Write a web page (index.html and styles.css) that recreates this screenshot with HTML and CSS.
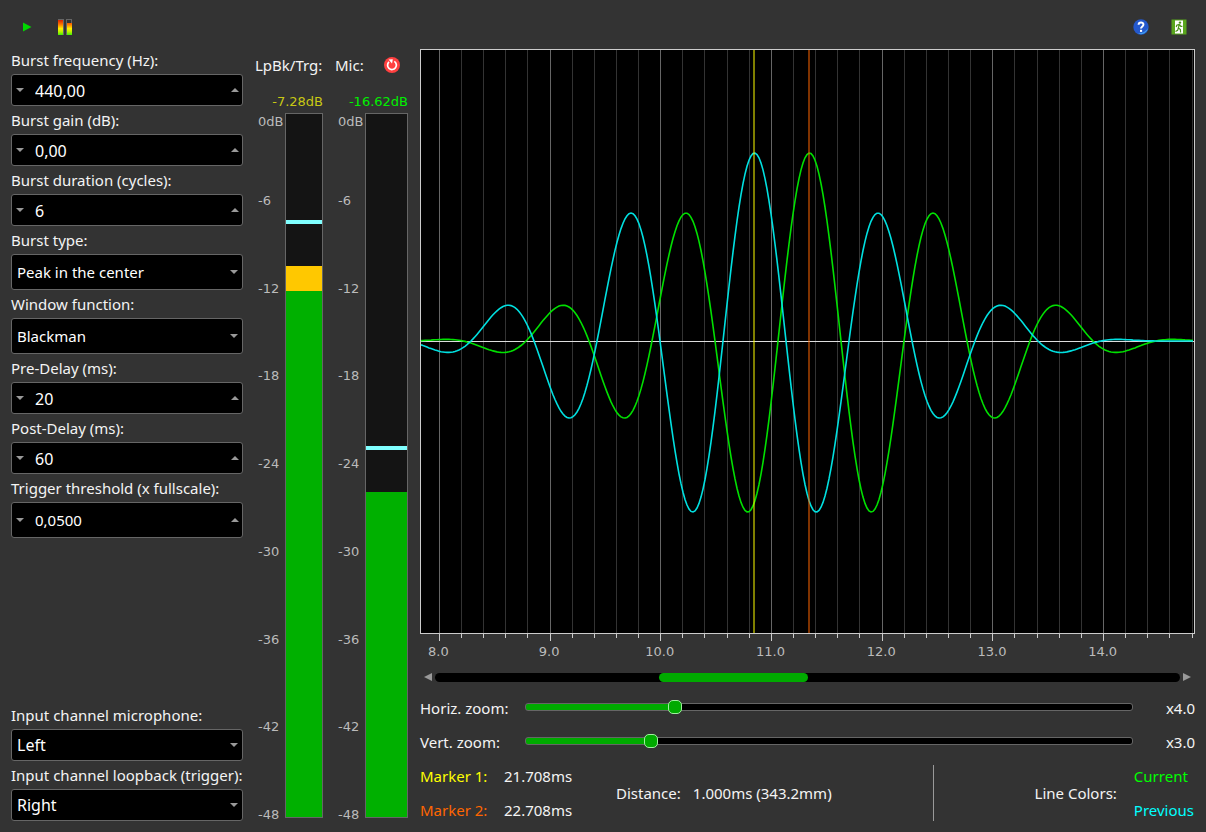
FILE: index.html
```
<!DOCTYPE html>
<html lang="en">
<head>
    <meta charset="UTF-8">
    <meta name="viewport" content="width=device-width, initial-scale=1.0">
    <title>Burst Measurement</title>
    <link rel="stylesheet" href="styles.css">
</head>
<body>
    <header class="toolbar">
        <button type="button" class="tool-btn" aria-label="Play">
            <svg width="16" height="16" viewBox="0 0 16 16"><path d="M4 3.5 L12.5 8 L4 12.5 Z" fill="#00d800"/></svg>
        </button>
        <button type="button" class="tool-btn" aria-label="Levels">
            <svg width="16" height="16" viewBox="0 0 16 16">
                <defs>
                    <linearGradient id="level" x1="0" y1="0" x2="0" y2="16" gradientUnits="userSpaceOnUse">
                        <stop offset="0.1" stop-color="#dd2a00"/>
                        <stop offset="0.35" stop-color="#ff7a00"/>
                        <stop offset="0.6" stop-color="#fff000"/>
                        <stop offset="0.8" stop-color="#b8f000"/>
                        <stop offset="1" stop-color="#3ff000"/>
                    </linearGradient>
                </defs>
                <rect x="1" y="0" width="6" height="16" fill="#666"/>
                <rect x="9" y="0" width="6" height="16" fill="#666"/>
                <rect x="1" y="1" width="5" height="15" fill="url(#level)"/>
                <rect x="10" y="1" width="4" height="3" fill="#333"/>
                <rect x="10" y="4" width="5" height="12" fill="url(#level)"/>
            </svg>
        </button>
        <span class="toolbar-space"></span>
        <button type="button" class="tool-btn" aria-label="Help">
            <svg width="16" height="16" viewBox="0 0 16 16">
                <circle cx="8" cy="8" r="7.7" fill="#2458cc"/>
                <path d="M15 9 A7.2 7.2 0 0 1 5 14.5 Q12 14 15 9 Z" fill="#3fa0f0"/>
                <path d="M5.6 5.8 C5.6 2.6 10.6 2.7 10.4 5.7 C10.3 7.5 8 7.5 8 9.6" fill="none" stroke="#fff" stroke-width="2"/>
                <rect x="7" y="10.8" width="2.1" height="2.1" fill="#fff"/>
            </svg>
        </button>
        <button type="button" class="tool-btn" aria-label="Quit">
            <svg width="16" height="16" viewBox="0 0 16 16">
                <rect x="0.5" y="0.5" width="15" height="15" fill="#59a51d"/>
                <rect x="4" y="1.5" width="8" height="13" fill="#fff"/>
                <circle cx="9" cy="3.6" r="1.2" fill="#4d941a"/>
                <path d="M8.4 5 L7.4 9 L9.4 10.6 L9.6 13.5 M7.4 9 L6.6 11.4 L4.5 12.5 M8.4 5.4 L5.8 6.2 L5.2 8 M8.6 5.6 L9.8 7.4 L11.4 7.4" fill="none" stroke="#4d941a" stroke-width="1.2"/>
            </svg>
        </button>
    </header>

    <main class="main">
        <form class="settings">
            <label for="freq">Burst frequency (Hz):</label>
            <div class="spin">
                <button type="button" class="spin-down" aria-label="Decrease"></button>
                <input type="text" id="freq" value="440,00">
                <button type="button" class="spin-up" aria-label="Increase"></button>
            </div>
            <label for="gain">Burst gain (dB):</label>
            <div class="spin">
                <button type="button" class="spin-down" aria-label="Decrease"></button>
                <input type="text" id="gain" value="0,00">
                <button type="button" class="spin-up" aria-label="Increase"></button>
            </div>
            <label for="duration">Burst duration (cycles):</label>
            <div class="spin">
                <button type="button" class="spin-down" aria-label="Decrease"></button>
                <input type="text" id="duration" value="6">
                <button type="button" class="spin-up" aria-label="Increase"></button>
            </div>
            <label for="type">Burst type:</label>
            <div class="combo tall">
                <select id="type"><option>Peak in the center</option></select>
            </div>
            <label for="window">Window function:</label>
            <div class="combo tall">
                <select id="window"><option>Blackman</option></select>
            </div>
            <label for="predelay">Pre-Delay (ms):</label>
            <div class="spin">
                <button type="button" class="spin-down" aria-label="Decrease"></button>
                <input type="text" id="predelay" value="20">
                <button type="button" class="spin-up" aria-label="Increase"></button>
            </div>
            <label for="postdelay">Post-Delay (ms):</label>
            <div class="spin">
                <button type="button" class="spin-down" aria-label="Decrease"></button>
                <input type="text" id="postdelay" value="60">
                <button type="button" class="spin-up" aria-label="Increase"></button>
            </div>
            <label for="threshold">Trigger threshold (x fullscale):</label>
            <div class="spin tall">
                <button type="button" class="spin-down" aria-label="Decrease"></button>
                <input type="text" id="threshold" value="0,0500">
                <button type="button" class="spin-up" aria-label="Increase"></button>
            </div>

            <div class="settings-space"></div>

            <label for="mic">Input channel microphone:</label>
            <div class="combo">
                <select id="mic"><option>Left</option><option>Right</option></select>
            </div>
            <label for="loopback">Input channel loopback (trigger):</label>
            <div class="combo">
                <select id="loopback"><option>Right</option><option>Left</option></select>
            </div>
        </form>

        <section class="meter">
            <div class="meter-head">LpBk/Trg:</div>
            <div class="meter-value warn">-7.28dB</div>
            <div class="meter-body">
                <div class="scale">
                    <span>0dB</span><span>-6</span><span>-12</span><span>-18</span><span>-24</span><span>-30</span><span>-36</span><span>-42</span><span>-48</span>
                </div>
                <div class="bar">
                    <div class="bar-peak" style="bottom: 84.4%"></div>
                    <div class="bar-warn" style="height: 3.6%"></div>
                    <div class="bar-ok" style="height: 74.8%"></div>
                </div>
            </div>
        </section>

        <section class="meter meter-mic">
            <div class="meter-head">
                Mic:
                <button type="button" class="reset-btn" aria-label="Reset">
                    <svg width="16" height="16" viewBox="0 0 16 16">
                        <circle cx="8" cy="8" r="8" fill="#ff4040"/>
                        <path d="M10.3 4.4 A4.4 4.4 0 1 1 5 4.9" fill="none" stroke="#fff" stroke-width="1.7"/>
                        <path d="M4.6 2.6 L8.8 2.2 L8 6.4 Z" fill="#fff"/>
                    </svg>
                </button>
            </div>
            <div class="meter-value ok">-16.62dB</div>
            <div class="meter-body">
                <div class="scale">
                    <span>0dB</span><span>-6</span><span>-12</span><span>-18</span><span>-24</span><span>-30</span><span>-36</span><span>-42</span><span>-48</span>
                </div>
                <div class="bar">
                    <div class="bar-peak" style="bottom: 52.2%"></div>
                    <div class="bar-ok" style="height: 46.2%"></div>
                </div>
            </div>
        </section>

        <section class="scope">
            <div class="chart">
                <svg id="plot" viewBox="0 0 773 583" preserveAspectRatio="none"></svg>
            </div>
            <svg id="ticks" class="ticks" viewBox="0 0 773 8" preserveAspectRatio="none"></svg>
            <div class="tick-labels">
                <span>8.0</span><span>9.0</span><span>10.0</span><span>11.0</span><span>12.0</span><span>13.0</span><span>14.0</span>
            </div>

            <div class="scroll-row">
                <button type="button" class="scroll-left" aria-label="Scroll left"></button>
                <input type="range" class="scrollbar" min="0" max="1000" value="376" aria-label="Scroll position">
                <button type="button" class="scroll-right" aria-label="Scroll right"></button>
            </div>

            <div class="zoom-row">
                <label for="hzoom">Horiz. zoom:</label>
                <input type="range" class="slider" id="hzoom" min="0" max="1000" value="240">
                <output for="hzoom">x4.0</output>
            </div>
            <div class="zoom-row">
                <label for="vzoom">Vert. zoom:</label>
                <input type="range" class="slider" id="vzoom" min="0" max="1000" value="200">
                <output for="vzoom">x3.0</output>
            </div>

            <div class="info">
                <div class="markers">
                    <span class="marker1">Marker 1:</span><span>21.708ms</span>
                    <span class="marker2">Marker 2:</span><span>22.708ms</span>
                </div>
                <div class="distance"><span>Distance:</span><span>1.000ms (343.2mm)</span></div>
                <div class="divider"></div>
                <div class="legend-title">Line Colors:</div>
                <div class="legend">
                    <span class="current">Current</span>
                    <span class="previous">Previous</span>
                </div>
            </div>
        </section>
    </main>

    <script src="script.js"></script>
</body>
</html>
```
FILE: styles.css
```
* {
    margin: 0;
    padding: 0;
    box-sizing: border-box;
}

body {
    display: flex;
    flex-direction: column;
    min-height: 100vh;
    background: #333;
    color: #f4f4f4;
    font-family: 'Noto Sans', sans-serif;
    font-size: 15px;
    line-height: 22px;
}

button {
    background: none;
    border: none;
    cursor: pointer;
}

svg {
    display: block;
}

/* Toolbar */
.toolbar {
    display: flex;
    padding: 8px 8px 0;
}

.tool-btn {
    display: flex;
    align-items: center;
    justify-content: center;
    width: 38px;
    height: 38px;
}

.toolbar-space {
    flex: 1;
}

.main {
    flex: 1;
    display: flex;
    gap: 12px;
    padding: 0 11px 11px;
}

/* Settings */
.settings {
    display: flex;
    flex-direction: column;
    width: 232px;
}

.settings label {
    line-height: 28px;
    white-space: nowrap;
}

.settings-space {
    flex: 1;
}

.spin,
.combo {
    display: flex;
    align-items: center;
    height: 32px;
    background: #000;
    border: 1px solid #666;
    border-radius: 3px;
    font-size: 16px;
}

.tall {
    height: 36px;
    font-size: 15px;
}

.spin input,
.combo select {
    flex: 1;
    min-width: 0;
    height: 100%;
    background: none;
    border: none;
    outline: none;
    color: #fff;
    font-family: inherit;
    font-size: inherit;
}

.spin input {
    padding-top: 2px;
}

.spin.tall input {
    padding-top: 0;
}

.spin button {
    display: flex;
    align-items: center;
    height: 100%;
}

.spin-down {
    width: 23px;
    padding-left: 4px;
}

.spin-up {
    width: 11px;
}

.spin-down::before,
.spin-up::before,
.combo::after {
    content: '';
    border: 4px solid transparent;
}

.spin-down::before,
.combo::after {
    border-top-color: #999;
    border-bottom: none;
}

.spin-up::before {
    border-bottom-color: #999;
    border-top: none;
}

.combo {
    padding-right: 4px;
}

.combo select {
    appearance: none;
    padding: 0 0 1px 5px;
}

/* Level meters */
.meter {
    display: flex;
    flex-direction: column;
    width: 68px;
    padding-bottom: 3px;
}

.meter-mic {
    width: 73px;
}

.meter-head {
    display: flex;
    align-items: center;
    justify-content: space-between;
    height: 38px;
    padding-right: 8px;
    white-space: nowrap;
}

.meter-value {
    margin: 9px 0 3px;
    text-align: right;
    font-family: 'DejaVu Sans', sans-serif;
    font-size: 13px;
    line-height: 17px;
}

.meter-value.warn {
    color: #c8c814;
}

.meter-value.ok {
    color: #00f000;
}

.meter-body {
    flex: 1;
    display: flex;
}

.scale {
    display: flex;
    flex-direction: column;
    width: 30px;
    margin-bottom: -5px;
    padding: 1px 0 0 3px;
    color: #bbb;
    font-family: 'DejaVu Sans', sans-serif;
    font-size: 13px;
    line-height: 16px;
}

.scale span {
    flex: 1;
    display: flex;
    align-items: flex-end;
}

/* top label hangs below the 0 dB line */
.scale span:first-child {
    flex: 0 0 7px;
    height: 7px;
    align-items: flex-start;
}

.bar {
    flex: 1;
    position: relative;
    display: flex;
    flex-direction: column;
    justify-content: flex-end;
    background: #141414;
    border: 1px solid #666;
}

.bar-ok {
    background: #00b000;
}

.bar-warn {
    background: #ffc800;
}

.bar-peak {
    position: absolute;
    left: 0;
    right: 0;
    height: 4px;
    background: #80ffff;
}

/* Scope */
.scope {
    flex: 1;
    min-width: 0;
    display: flex;
    flex-direction: column;
    padding-top: 3px;
}

.chart {
    flex: 1;
    display: flex;
    min-height: 200px;
    background: #000;
    border: 1px solid #ccc;
}

.chart svg {
    width: 100%;
    height: 100%;
}

.ticks {
    width: 100%;
    height: 8px;
    padding: 0 1px;
}

.tick-labels {
    display: flex;
    margin: 0 37px 0 -37px;
    color: #bbb;
    font-family: 'DejaVu Sans', sans-serif;
    font-size: 13px;
    line-height: 20px;
}

.tick-labels span {
    flex: 1;
    text-align: center;
}

input[type="range"] {
    appearance: none;
    background: none;
    outline: none;
}

.scroll-row {
    display: flex;
    align-items: center;
    gap: 3px;
    height: 24px;
    margin: 3px 0 1px;
    padding: 0 4px;
}

.scrollbar {
    flex: 1;
    min-width: 0;
    height: 9px;
}

.scrollbar::-webkit-slider-runnable-track {
    height: 9px;
    background: #000;
    border-radius: 5px;
}

.scrollbar::-webkit-slider-thumb {
    appearance: none;
    width: 149px;
    height: 9px;
    background: #00aa00;
    border-radius: 5px;
}

.scroll-left,
.scroll-right {
    border: 4px solid transparent;
}

.scroll-left {
    border-right: 8px solid #999;
    border-left: none;
}

.scroll-right {
    border-left: 8px solid #999;
    border-right: none;
}

.zoom-row {
    display: flex;
    align-items: center;
    height: 34px;
}

.zoom-row label {
    width: 105px;
    padding-top: 2px;
}

.zoom-row output {
    width: 62px;
    padding-top: 2px;
    text-align: right;
}

.slider {
    flex: 1;
    min-width: 0;
    height: 14px;
}

.slider::-webkit-slider-runnable-track {
    height: 8px;
    border: 1px solid #666;
    border-radius: 3px;
    background: linear-gradient(to right, #00aa00 var(--fill, 0%), #000 var(--fill, 0%));
}

.slider::-webkit-slider-thumb {
    appearance: none;
    width: 14px;
    height: 14px;
    margin-top: -4px;
    background: #00aa00;
    border: 1px solid #a0f0a0;
    border-radius: 5px;
}

.info {
    display: flex;
    align-items: center;
    margin-top: 7px;
    padding-right: 1px;
}

.markers {
    display: grid;
    grid-template-columns: 84px 112px;
    row-gap: 12px;
}

.marker1 {
    color: #ffff00;
}

.marker2 {
    color: #ff6600;
}

.distance {
    flex: 1;
    display: flex;
    gap: 12px;
}

.divider {
    align-self: stretch;
    width: 1px;
    background: #999;
}

.legend-title {
    margin-left: 101px;
}

.legend {
    display: flex;
    flex-direction: column;
    gap: 12px;
    margin-left: 17px;
}

.current {
    color: #00ff00;
}

.previous {
    color: #00ffff;
}
```
FILE: script.js
```
const SVG_NS = 'http://www.w3.org/2000/svg';
const plot = document.getElementById('plot');
const ticks = document.getElementById('ticks');

const WIDTH = 773;
const HEIGHT = 583;
const MIDDLE = 291;
const AMPLITUDE = 188;
const PERIOD = 126;
const HALF_WINDOW = 409;
const MARKERS = [
    { x: 333, color: '#ffff00' },
    { x: 388, color: '#ff6600' }
];

function addShape(parent, name, attrs) {
    const el = document.createElementNS(SVG_NS, name);
    for (const key in attrs) {
        el.setAttribute(key, attrs[key]);
    }
    parent.appendChild(el);
}

function addLine(parent, x1, y1, x2, y2, color) {
    addShape(parent, 'line', { x1, y1, x2, y2, stroke: color, 'shape-rendering': 'crispEdges' });
}

// Blackman window around the center of the burst
function blackman(x) {
    if (Math.abs(x) > HALF_WINDOW) return 0;
    const a = Math.PI * x / HALF_WINDOW;
    return 0.42 + 0.5 * Math.cos(a) + 0.08 * Math.cos(2 * a);
}

function addWave(center, color) {
    const points = [];
    for (let x = 0; x <= WIDTH; x += 2) {
        const d = x - center;
        const y = MIDDLE - AMPLITUDE * blackman(d) * Math.cos(2 * Math.PI * d / PERIOD);
        points.push(x + ',' + y.toFixed(1));
    }
    addShape(plot, 'polyline', { points: points.join(' '), fill: 'none', stroke: color, 'stroke-width': 1.6 });
}

// Grid and ticks, every fifth one is a major line
for (let i = 0; i < 35; i++) {
    const x = Math.floor(18.3 + i * 22.14) + 0.5;
    const major = i % 5 === 0;
    addLine(plot, x, 0, x, HEIGHT, major ? '#666' : '#333');
    addLine(ticks, x, 0, x, major ? 7 : 4, '#ccc');
}

addLine(plot, 0, MIDDLE + 0.5, WIDTH, MIDDLE + 0.5, '#ddd');
addWave(388.5, '#00e000');
addWave(333.5, '#00e0e0');

MARKERS.forEach(m => {
    addShape(plot, 'rect', { x: m.x - 1, y: 0, width: 2, height: HEIGHT, fill: m.color, opacity: 0.5 });
});

// Colored part of the zoom sliders
document.querySelectorAll('.slider').forEach(slider => {
    const update = () => slider.style.setProperty('--fill', slider.value / slider.max * 100 + '%');
    slider.addEventListener('input', update);
    update();
});
```
